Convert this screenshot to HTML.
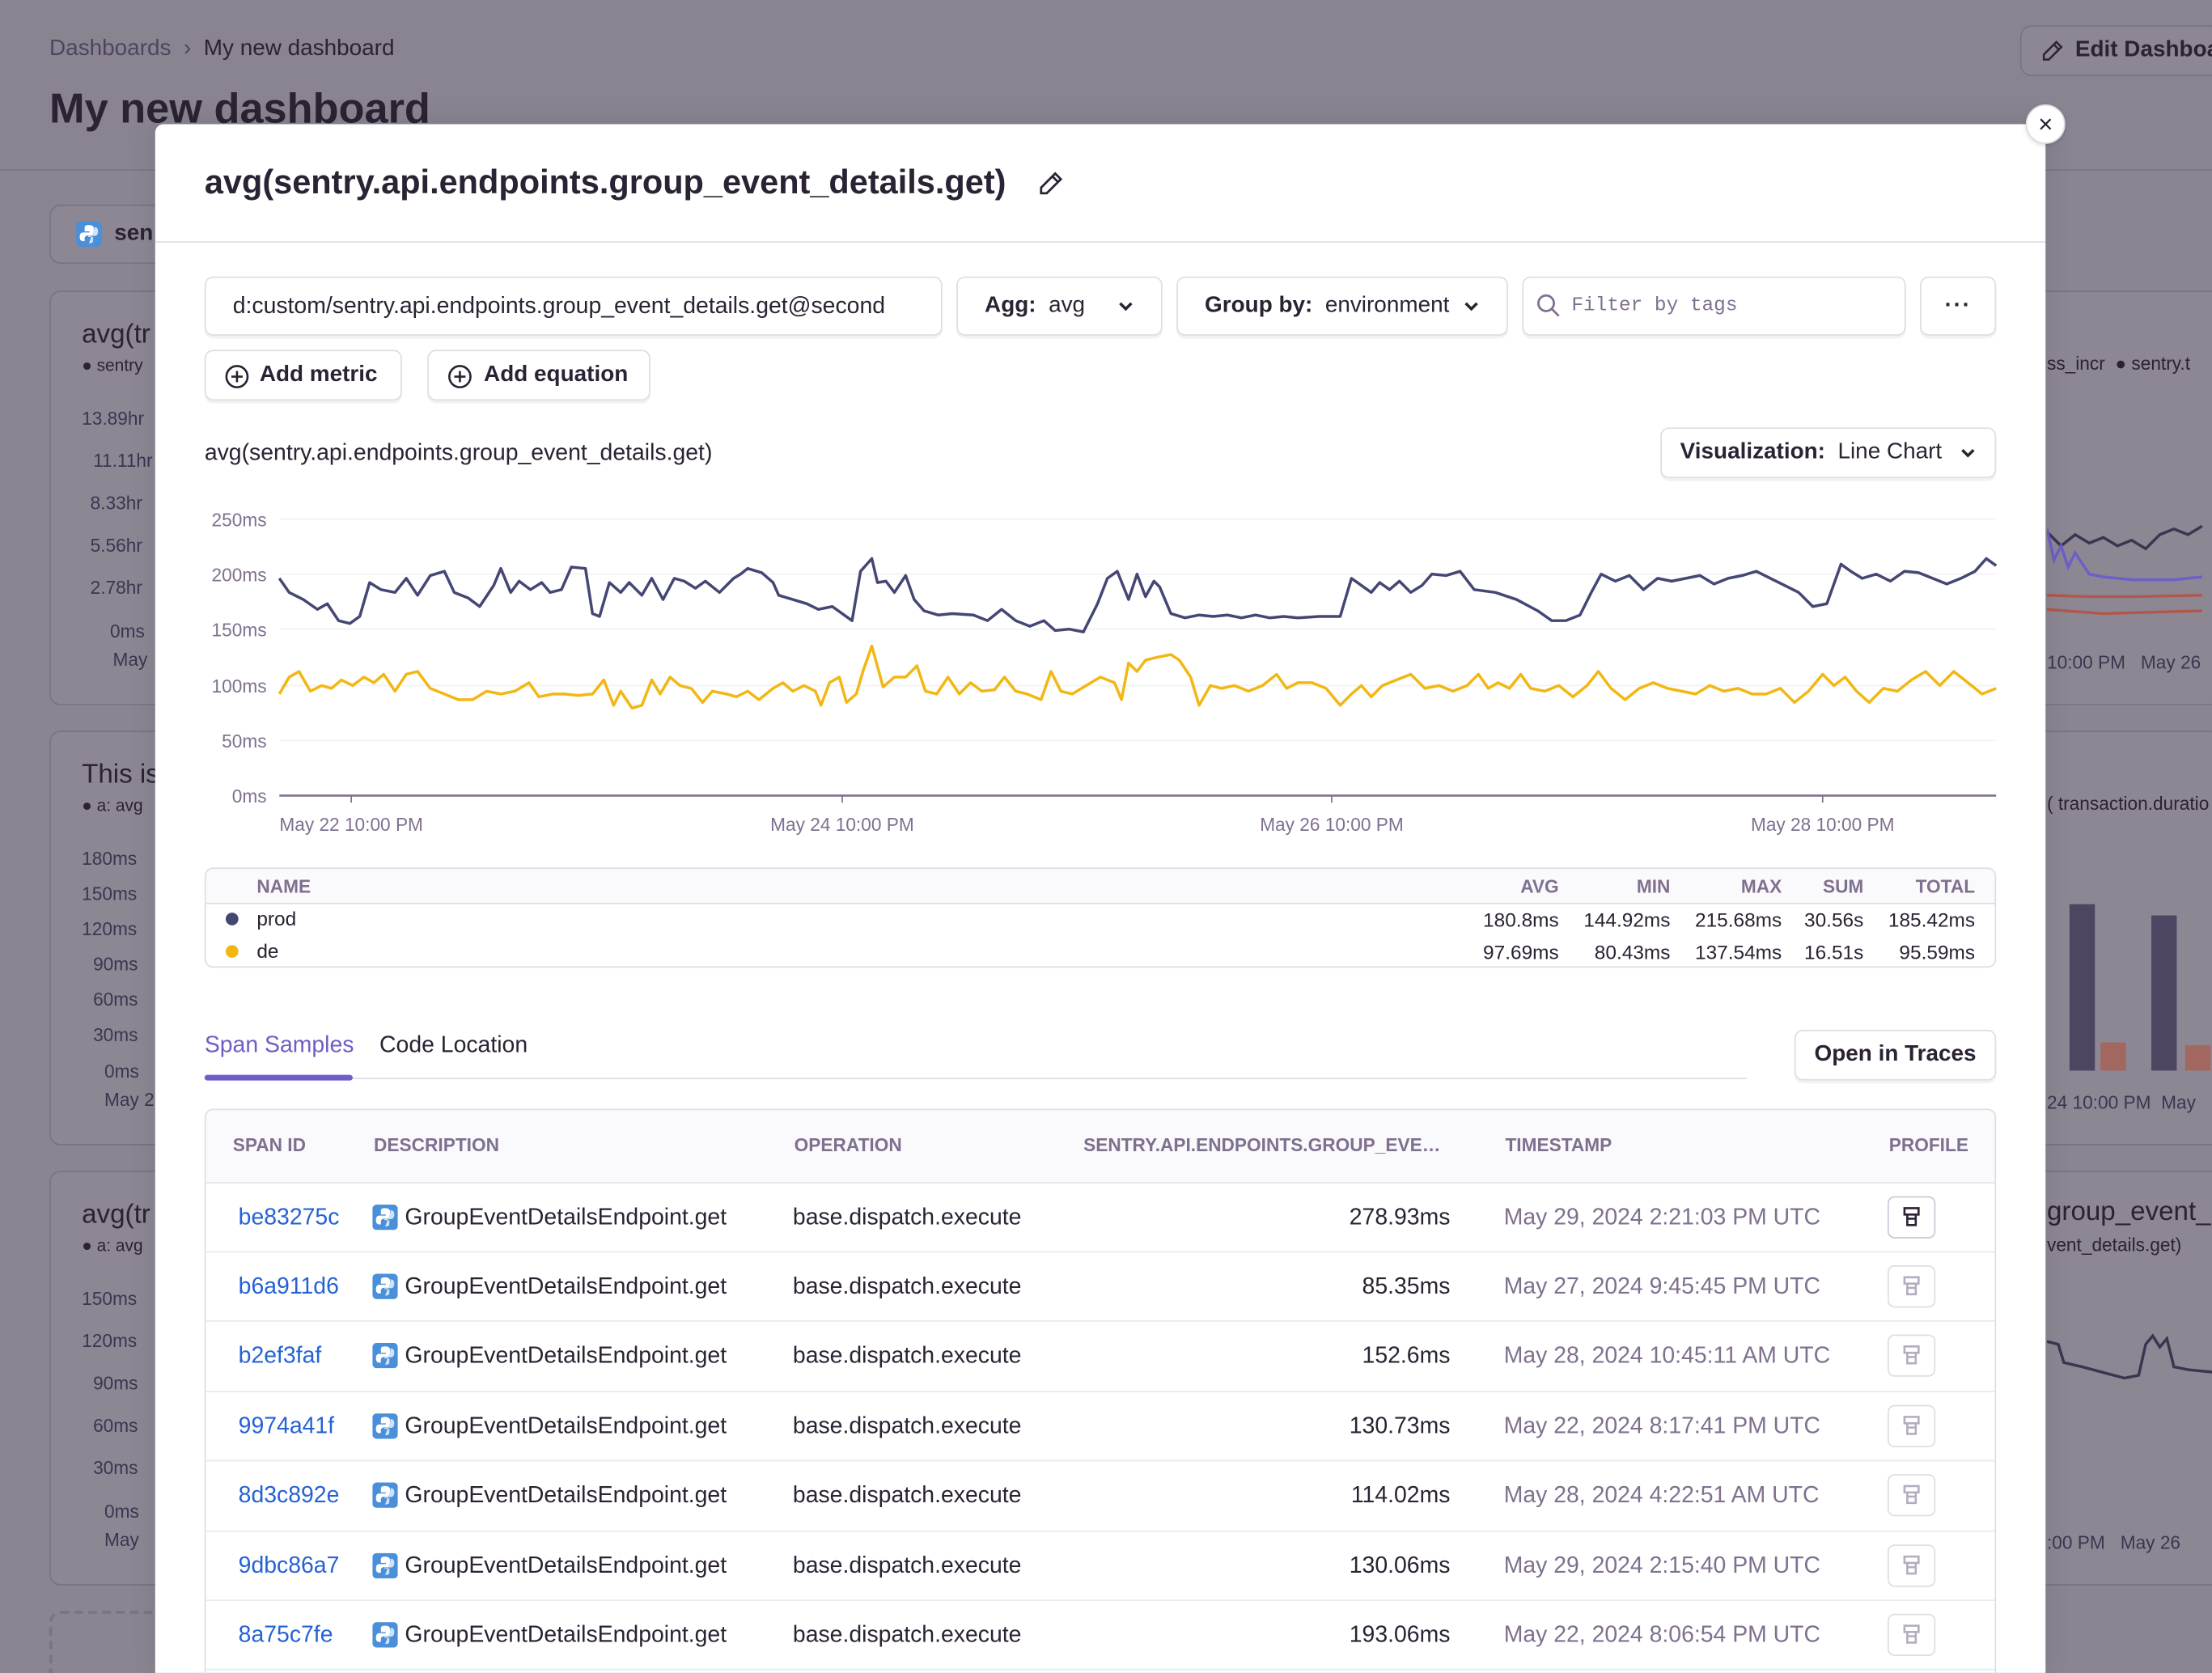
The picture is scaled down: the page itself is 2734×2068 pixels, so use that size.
<!DOCTYPE html>
<html><head><meta charset="utf-8">
<style>
html,body{margin:0;padding:0;width:2734px;height:2068px;overflow:hidden;background:#8b8592;}
#s{position:absolute;left:0;top:0;width:1568px;height:1186px;transform:scale(1.74362);transform-origin:0 0;font-family:"Liberation Sans",sans-serif;color:#2b2233;background:#8b8592;overflow:hidden}
.a{position:absolute}
.bgp{position:absolute;border:1px solid #7a7384;border-radius:8px;background:#8d8794}
.btn{position:absolute;border:1px solid #e0dce5;border-radius:6px;background:#fff;box-shadow:0 2px 0 rgba(43,34,51,.06);box-sizing:border-box;display:flex;align-items:center;font-size:16px}
.mut{color:#80708f}
.th{font-size:13px;font-weight:bold;color:#80708f;text-transform:uppercase}
.row{position:absolute;left:0;width:1268px;height:49px;border-top:1px solid #ebe8ef;font-size:16.3px}
.row span{position:absolute;top:15px;white-space:nowrap}
.pic{position:absolute;left:118px;top:15px;width:18px;height:18px}
.prof{position:absolute;left:1192px;top:9px;width:34px;height:30px;border:1px solid #e0dce5;border-radius:5px;box-sizing:border-box}
.prof svg{position:absolute;left:9px;top:6px}
</style></head><body><div id="s">
<svg width="0" height="0" style="position:absolute"><defs>
<g id="py"><rect x="0" y="0" width="18" height="18" rx="3" fill="#4a8fd9"/><path d="M9 2.5 C6 2.5 6 3.5 6 5 V7 H9.5 V7.8 H4.8 C3.3 7.8 2.5 9 2.5 11 C2.5 13 3.3 14 4.8 14 H6 V12 C6 10.8 7 10 8 10 H11 C12 10 12.5 9.3 12.5 8.5 V5 C12.5 3.5 11.5 2.5 9 2.5 Z" fill="#fff"/><path d="M9 15.5 C12 15.5 12 14.5 12 13 V11 H8.5 V10.2 H13.2 C14.7 10.2 15.5 9 15.5 7 C15.5 5 14.7 4 13.2 4 H12.8 V5.5" fill="#cfe2f7"/></g>
<g id="pf"><path d="M2 1.5 H12 V6 H2 Z M1.5 6 H12.5 M4 6 V13.5 H10 V6 M4 9 H10" fill="none" stroke-width="1.5"/></g>
</defs></svg>
<!-- background page -->
<div class="a" style="left:0;top:0;width:1568px;height:120px;background:#8a8491;border-bottom:1px solid #7d7687"></div>
<div class="a mut" style="left:35px;top:26px;font-size:16px;color:#4e4560">Dashboards &nbsp;›&nbsp; <span style="color:#2b2233">My new dashboard</span></div>
<div class="a" style="left:35px;top:61px;font-size:30px;font-weight:bold;color:#2b2233">My new dashboard</div>
<div class="bgp" style="left:1432px;top:18px;width:160px;height:34px;"><svg class="a" style="left:14px;top:9px" width="16" height="16" viewBox="0 0 18 18"><path d="M12 2 L16 6 L6 16 L2 16 L2 12 Z M10 4 L14 8" fill="none" stroke="#2b2233" stroke-width="1.6"/></svg><span class="a" style="left:38px;top:8px;font-size:16px;font-weight:bold;color:#2b2233">Edit Dashboard</span></div>
<div class="bgp" style="left:35px;top:145px;width:100px;height:40px"><svg class="a" style="left:18px;top:11px" width="18" height="18"><use href="#py"/></svg><span class="a" style="left:45px;top:11px;font-size:16px;font-weight:bold">sen</span></div>
<div class="bgp" style="left:35px;top:206px;width:100px;height:292px"><span class="a" style="left:22px;top:20px;font-size:19px">avg(tr</span><span class="a" style="left:22px;top:45px;font-size:12px">● sentry</span>
<span class="a" style="left:22px;top:82px;font-size:13px;color:#3d3550">13.89hr</span><span class="a" style="left:30px;top:112px;font-size:13px;color:#3d3550">11.11hr</span><span class="a" style="left:28px;top:142px;font-size:13px;color:#3d3550">8.33hr</span><span class="a" style="left:28px;top:172px;font-size:13px;color:#3d3550">5.56hr</span><span class="a" style="left:28px;top:202px;font-size:13px;color:#3d3550">2.78hr</span><span class="a" style="left:42px;top:233px;font-size:13px;color:#3d3550">0ms</span><span class="a" style="left:44px;top:253px;font-size:13px;color:#3d3550">May</span></div>
<div class="bgp" style="left:35px;top:518px;width:100px;height:292px"><span class="a" style="left:22px;top:20px;font-size:19px">This is</span><span class="a" style="left:22px;top:45px;font-size:12px">● a: avg</span>
<span class="a" style="left:22px;top:82px;font-size:13px;color:#3d3550">180ms</span><span class="a" style="left:22px;top:107px;font-size:13px;color:#3d3550">150ms</span><span class="a" style="left:22px;top:132px;font-size:13px;color:#3d3550">120ms</span><span class="a" style="left:30px;top:157px;font-size:13px;color:#3d3550">90ms</span><span class="a" style="left:30px;top:182px;font-size:13px;color:#3d3550">60ms</span><span class="a" style="left:30px;top:207px;font-size:13px;color:#3d3550">30ms</span><span class="a" style="left:38px;top:233px;font-size:13px;color:#3d3550">0ms</span><span class="a" style="left:38px;top:253px;font-size:13px;color:#3d3550">May 2</span></div>
<div class="bgp" style="left:35px;top:830px;width:100px;height:292px"><span class="a" style="left:22px;top:20px;font-size:19px">avg(tr</span><span class="a" style="left:22px;top:45px;font-size:12px">● a: avg</span>
<span class="a" style="left:22px;top:82px;font-size:13px;color:#3d3550">150ms</span><span class="a" style="left:22px;top:112px;font-size:13px;color:#3d3550">120ms</span><span class="a" style="left:30px;top:142px;font-size:13px;color:#3d3550">90ms</span><span class="a" style="left:30px;top:172px;font-size:13px;color:#3d3550">60ms</span><span class="a" style="left:30px;top:202px;font-size:13px;color:#3d3550">30ms</span><span class="a" style="left:38px;top:233px;font-size:13px;color:#3d3550">0ms</span><span class="a" style="left:38px;top:253px;font-size:13px;color:#3d3550">May</span></div>
<div class="a" style="left:35px;top:1142px;width:100px;height:60px;border:2px dashed #7a7384;border-radius:8px"></div>
<div class="bgp" style="left:1430px;top:206px;width:160px;height:292px"><span class="a" style="left:20px;top:43px;font-size:13px">ss_incr &nbsp;● sentry.t</span>
<svg class="a" style="left:20px;top:160px" width="140" height="80"><polyline fill="none" stroke="#3d3550" stroke-width="2" points="0,10 10,20 20,12 30,18 40,14 50,20 60,16 70,22 80,12 90,8 100,12 110,6"/><polyline fill="none" stroke="#6c5fc7" stroke-width="2" points="0,8 5,30 10,20 15,35 20,25 30,40 40,42 60,44 90,44 110,42"/><polyline fill="none" stroke="#b0584a" stroke-width="2" points="0,55 30,56 60,56 110,55"/><polyline fill="none" stroke="#b0584a" stroke-width="2" points="0,65 40,68 110,66"/></svg>
<span class="a" style="left:20px;top:255px;font-size:13px;color:#3d3550">10:00 PM &nbsp;&nbsp;May 26</span></div>
<div class="bgp" style="left:1430px;top:518px;width:160px;height:292px"><span class="a" style="left:20px;top:43px;font-size:13px">( transaction.duratio</span>
<div class="a" style="left:36px;top:122px;width:18px;height:118px;background:#4e4563"></div><div class="a" style="left:58px;top:220px;width:18px;height:20px;background:#a2675e"></div>
<div class="a" style="left:94px;top:130px;width:18px;height:110px;background:#4e4563"></div><div class="a" style="left:118px;top:222px;width:18px;height:18px;background:#a2675e"></div>
<span class="a" style="left:20px;top:255px;font-size:13px;color:#3d3550">24 10:00 PM &nbsp;May</span></div>
<div class="bgp" style="left:1430px;top:830px;width:160px;height:292px"><span class="a" style="left:20px;top:18px;font-size:19px">group_event_</span><span class="a" style="left:20px;top:44px;font-size:13px">vent_details.get)</span>
<svg class="a" style="left:20px;top:110px" width="140" height="50"><polyline fill="none" stroke="#3d3550" stroke-width="2" points="0,10 8,12 12,25 25,28 40,32 55,36 65,34 70,12 75,6 80,14 85,8 90,28 100,30 120,32 140,30"/></svg>
<span class="a" style="left:20px;top:255px;font-size:13px;color:#3d3550">:00 PM &nbsp;&nbsp;May 26</span></div>

<!-- modal -->
<div class="a" style="left:110px;top:88px;width:1340px;height:1100px;background:#fff;border-radius:6px 6px 0 0;box-shadow:0 0 20px rgba(0,0,0,.1)">
 <div class="a" style="left:35px;top:28px;font-size:23.8px;font-weight:bold;color:#2b2233;white-space:nowrap">avg(sentry.api.endpoints.group_event_details.get)</div>
 <svg class="a" style="left:626px;top:33px" width="18" height="18" viewBox="0 0 18 18"><path d="M12 2 L16 6 L6 16 L2 16 L2 12 Z M10 4 L14 8" fill="none" stroke="#2b2233" stroke-width="1.6"/></svg>
 <div class="a" style="left:0;top:83px;width:1340px;height:1px;background:#e0dce5"></div>
</div>
<div class="a" style="left:1436px;top:74px;width:26px;height:26px;border-radius:50%;background:#fff;border:1px solid #e0dce5;box-shadow:0 1px 3px rgba(0,0,0,.15);text-align:center;line-height:26px;font-size:18px;color:#2b2233">×</div>

<div class="btn" style="left:145px;top:196px;width:523px;height:42px;padding-left:19px;white-space:nowrap;font-size:16.3px">d:custom/sentry.api.endpoints.group_event_details.get@second</div>
<div class="btn" style="left:678px;top:196px;width:146px;height:42px;padding-left:19px"><b>Agg:</b>&nbsp; avg<svg class="a" style="left:113px;top:16px" width="12" height="10"><path d="M2 2 L6 6 L10 2" fill="none" stroke="#2b2233" stroke-width="2"/></svg></div>
<div class="btn" style="left:834px;top:196px;width:235px;height:42px;padding-left:19px"><b>Group by:</b>&nbsp; environment<svg class="a" style="left:202px;top:16px" width="12" height="10"><path d="M2 2 L6 6 L10 2" fill="none" stroke="#2b2233" stroke-width="2"/></svg></div>
<div class="btn" style="left:1079px;top:196px;width:272px;height:42px;padding-left:34px;font-family:'Liberation Mono',monospace;font-size:14px;color:#80708f">Filter by tags<svg class="a" style="left:9px;top:11px" width="18" height="18"><circle cx="7" cy="7" r="5.5" fill="none" stroke="#80708f" stroke-width="1.6"/><path d="M11 11 L16 16" stroke="#80708f" stroke-width="1.6"/></svg></div>
<div class="btn" style="left:1361px;top:196px;width:54px;height:42px;justify-content:center;font-weight:bold;letter-spacing:1px">···</div>
<div class="btn" style="left:145px;top:248px;width:140px;height:36px;padding-left:38px;font-weight:bold"><svg class="a" style="left:13px;top:9px" width="18" height="18"><circle cx="9" cy="9" r="7.5" fill="none" stroke="#2b2233" stroke-width="1.5"/><path d="M9 5 V13 M5 9 H13" stroke="#2b2233" stroke-width="1.5"/></svg>Add metric</div>
<div class="btn" style="left:303px;top:248px;width:158px;height:36px;padding-left:39px;font-weight:bold"><svg class="a" style="left:13px;top:9px" width="18" height="18"><circle cx="9" cy="9" r="7.5" fill="none" stroke="#2b2233" stroke-width="1.5"/><path d="M9 5 V13 M5 9 H13" stroke="#2b2233" stroke-width="1.5"/></svg>Add equation</div>

<div class="a" style="left:145px;top:312px;font-size:16.3px">avg(sentry.api.endpoints.group_event_details.get)</div>
<div class="btn" style="left:1177px;top:303px;width:238px;height:36px;padding-left:13px"><b>Visualization:</b>&nbsp; Line Chart<svg class="a" style="left:211px;top:13px" width="12" height="10"><path d="M2 2 L6 6 L10 2" fill="none" stroke="#2b2233" stroke-width="2"/></svg></div>

<!-- chart -->
<svg class="a" style="left:0;top:0" width="1568" height="600">
<g font-family="Liberation Sans" font-size="13" fill="#80708f" text-anchor="end">
<text x="189" y="373">250ms</text><text x="189" y="412">200ms</text><text x="189" y="451">150ms</text><text x="189" y="491">100ms</text><text x="189" y="530">50ms</text><text x="189" y="569">0ms</text></g>
<g stroke="#f3f1f5" stroke-width="1"><line x1="198" x2="1415" y1="368" y2="368"/><line x1="198" x2="1415" y1="407" y2="407"/><line x1="198" x2="1415" y1="446" y2="446"/><line x1="198" x2="1415" y1="486" y2="486"/><line x1="198" x2="1415" y1="525" y2="525"/></g>
<line x1="198" x2="1415" y1="564" y2="564" stroke="#80708f" stroke-width="1.5"/>
<g stroke="#80708f"><line x1="249" x2="249" y1="564" y2="569"/><line x1="597" x2="597" y1="564" y2="569"/><line x1="944" x2="944" y1="564" y2="569"/><line x1="1292" x2="1292" y1="564" y2="569"/></g>
<g font-family="Liberation Sans" font-size="13" fill="#80708f" text-anchor="middle"><text x="249" y="589">May 22 10:00 PM</text><text x="597" y="589">May 24 10:00 PM</text><text x="944" y="589">May 26 10:00 PM</text><text x="1292" y="589">May 28 10:00 PM</text></g>
<polyline fill="none" stroke="#444674" stroke-width="2" stroke-linejoin="round" points="198,410 205,420 215,425 225,432 232,428 240,440 248,442 255,437 262,413 270,418 280,420 288,410 296,422 305,408 315,405 322,420 332,424 340,430 350,415 355,403 362,420 368,412 376,418 384,413 390,420 398,418 405,402 415,403 420,435 425,437 432,413 440,420 446,413 455,422 462,410 470,425 478,410 485,412 493,417 500,412 510,420 520,410 525,407 530,403 540,406 548,413 552,422 562,425 572,428 580,432 590,430 597,435 604,440 610,405 618,396 622,413 628,412 634,420 642,408 648,425 655,433 665,436 675,435 690,436 700,440 710,432 720,440 730,444 740,440 748,447 758,446 768,448 778,428 785,410 792,405 800,425 806,407 812,423 818,412 822,416 830,435 840,438 850,436 860,437 870,436 880,438 890,436 900,438 910,437 920,438 935,437 950,437 958,410 965,415 972,420 978,413 985,418 992,412 1000,420 1008,415 1015,407 1025,408 1035,405 1045,418 1060,420 1075,425 1090,433 1100,440 1110,440 1120,436 1128,420 1135,407 1145,412 1155,408 1165,418 1175,410 1185,412 1195,410 1205,408 1215,414 1225,410 1235,408 1245,405 1255,410 1265,415 1275,420 1285,430 1295,428 1305,400 1312,405 1320,410 1330,407 1340,412 1350,405 1360,406 1370,410 1380,414 1390,410 1400,405 1408,396 1415,401"/>
<polyline fill="none" stroke="#f2b712" stroke-width="2" stroke-linejoin="round" points="198,492 205,480 212,476 220,490 228,486 235,488 242,482 250,486 258,480 265,484 272,478 280,490 288,478 296,476 305,488 315,492 325,496 335,496 345,490 355,492 365,490 375,484 382,494 392,492 400,492 410,493 420,492 428,482 435,500 440,490 448,502 455,500 462,482 468,492 475,480 482,486 490,488 498,498 505,490 515,492 522,494 530,490 538,496 548,488 555,484 562,490 570,486 578,490 582,500 588,484 595,480 600,498 607,492 612,475 618,458 626,487 634,480 642,480 650,472 656,490 664,492 672,480 680,492 688,484 696,490 705,489 712,480 720,490 728,492 738,496 745,476 752,490 760,492 770,486 780,480 790,484 795,496 800,470 806,476 812,468 820,466 830,464 836,468 844,480 850,500 858,486 866,488 875,486 885,490 895,486 905,478 912,488 920,484 930,484 940,488 950,500 958,492 965,486 972,494 980,486 990,482 1000,478 1010,488 1020,486 1030,490 1040,486 1048,478 1055,488 1062,484 1070,488 1078,478 1085,488 1095,490 1105,486 1115,494 1125,486 1133,476 1142,488 1152,496 1162,488 1172,484 1182,488 1192,490 1202,492 1212,486 1222,490 1232,488 1242,492 1252,492 1262,488 1272,498 1282,490 1292,478 1300,486 1308,480 1316,490 1325,498 1335,488 1345,490 1355,482 1365,476 1375,486 1385,476 1395,484 1405,492 1415,488"/>
</svg>

<!-- legend -->
<div class="a" style="left:145px;top:615px;width:1270px;height:71px;border:1px solid #e0dce5;border-radius:6px;overflow:hidden;box-sizing:border-box">
 <div class="a" style="left:0;top:0;width:1270px;height:24px;background:#faf9fb;border-bottom:1px solid #e0dce5"></div>
 <span class="a th" style="left:36px;top:5px">Name</span>
 <span class="a th" style="right:309px;top:5px">Avg</span><span class="a th" style="right:230px;top:5px">Min</span><span class="a th" style="right:151px;top:5px">Max</span><span class="a th" style="right:93px;top:5px">Sum</span><span class="a th" style="right:14px;top:5px">Total</span>
 <div class="a" style="left:14px;top:31px;width:9px;height:9px;border-radius:50%;background:#444674"></div><span class="a" style="left:36px;top:27px;font-size:14px">prod</span>
 <div class="a" style="left:14px;top:54px;width:9px;height:9px;border-radius:50%;background:#f2b712"></div><span class="a" style="left:36px;top:50px;font-size:14px">de</span>
 <div class="a" style="right:309px;top:25px;font-size:14px;text-align:right;line-height:23px">180.8ms<br>97.69ms</div>
 <div class="a" style="right:230px;top:25px;font-size:14px;text-align:right;line-height:23px">144.92ms<br>80.43ms</div>
 <div class="a" style="right:151px;top:25px;font-size:14px;text-align:right;line-height:23px">215.68ms<br>137.54ms</div>
 <div class="a" style="right:93px;top:25px;font-size:14px;text-align:right;line-height:23px">30.56s<br>16.51s</div>
 <div class="a" style="right:14px;top:25px;font-size:14px;text-align:right;line-height:23px">185.42ms<br>95.59ms</div>
</div>

<!-- tabs -->
<div class="a" style="left:145px;top:732px;font-size:16.3px;color:#6c5fc7">Span Samples</div>
<div class="a" style="left:269px;top:732px;font-size:16.3px">Code Location</div>
<div class="a" style="left:145px;top:764px;width:1093px;height:1px;background:#e0dce5"></div>
<div class="a" style="left:145px;top:762px;width:105px;height:4px;border-radius:2px;background:#6c5fc7"></div>
<div class="btn" style="left:1272px;top:730px;width:143px;height:36px;justify-content:center;font-weight:bold">Open in Traces</div>

<!-- table -->
<div class="a" style="left:145px;top:786px;width:1270px;height:420px;border:1px solid #e0dce5;border-radius:6px;overflow:hidden;box-sizing:border-box">
 <div class="a" style="left:0;top:0;width:1270px;height:51px;background:#faf9fb;border-bottom:1px solid #e0dce5"></div>
 <span class="a th" style="left:19px;top:17px">Span ID</span><span class="a th" style="left:119px;top:17px">Description</span><span class="a th" style="left:417px;top:17px">Operation</span><span class="a th" style="left:622px;top:17px">sentry.api.endpoints.group_eve…</span><span class="a th" style="left:921px;top:17px">Timestamp</span><span class="a th" style="left:1193px;top:17px">Profile</span>
 <div class="row" style="top:51px"><span style="left:23px;color:#2562d4">be83275c</span><svg class="pic"><use href="#py"/></svg><span style="left:141px">GroupEventDetailsEndpoint.get</span><span style="left:416px">base.dispatch.execute</span><span style="right:386px">278.93ms</span><span class="mut" style="left:920px">May 29, 2024 2:21:03 PM UTC</span><i class="prof" style="border-color:#cfc8d8"><svg width="14" height="16" stroke="#2b2233"><use href="#pf"/></svg></i></div>
 <div class="row" style="top:100px"><span style="left:23px;color:#2562d4">b6a911d6</span><svg class="pic"><use href="#py"/></svg><span style="left:141px">GroupEventDetailsEndpoint.get</span><span style="left:416px">base.dispatch.execute</span><span style="right:386px">85.35ms</span><span class="mut" style="left:920px">May 27, 2024 9:45:45 PM UTC</span><i class="prof"><svg width="14" height="16" stroke="#b5adbf"><use href="#pf"/></svg></i></div>
 <div class="row" style="top:149px"><span style="left:23px;color:#2562d4">b2ef3faf</span><svg class="pic"><use href="#py"/></svg><span style="left:141px">GroupEventDetailsEndpoint.get</span><span style="left:416px">base.dispatch.execute</span><span style="right:386px">152.6ms</span><span class="mut" style="left:920px">May 28, 2024 10:45:11 AM UTC</span><i class="prof"><svg width="14" height="16" stroke="#b5adbf"><use href="#pf"/></svg></i></div>
 <div class="row" style="top:199px"><span style="left:23px;color:#2562d4">9974a41f</span><svg class="pic"><use href="#py"/></svg><span style="left:141px">GroupEventDetailsEndpoint.get</span><span style="left:416px">base.dispatch.execute</span><span style="right:386px">130.73ms</span><span class="mut" style="left:920px">May 22, 2024 8:17:41 PM UTC</span><i class="prof"><svg width="14" height="16" stroke="#b5adbf"><use href="#pf"/></svg></i></div>
 <div class="row" style="top:248px"><span style="left:23px;color:#2562d4">8d3c892e</span><svg class="pic"><use href="#py"/></svg><span style="left:141px">GroupEventDetailsEndpoint.get</span><span style="left:416px">base.dispatch.execute</span><span style="right:386px">114.02ms</span><span class="mut" style="left:920px">May 28, 2024 4:22:51 AM UTC</span><i class="prof"><svg width="14" height="16" stroke="#b5adbf"><use href="#pf"/></svg></i></div>
 <div class="row" style="top:298px"><span style="left:23px;color:#2562d4">9dbc86a7</span><svg class="pic"><use href="#py"/></svg><span style="left:141px">GroupEventDetailsEndpoint.get</span><span style="left:416px">base.dispatch.execute</span><span style="right:386px">130.06ms</span><span class="mut" style="left:920px">May 29, 2024 2:15:40 PM UTC</span><i class="prof"><svg width="14" height="16" stroke="#b5adbf"><use href="#pf"/></svg></i></div>
 <div class="row" style="top:347px"><span style="left:23px;color:#2562d4">8a75c7fe</span><svg class="pic"><use href="#py"/></svg><span style="left:141px">GroupEventDetailsEndpoint.get</span><span style="left:416px">base.dispatch.execute</span><span style="right:386px">193.06ms</span><span class="mut" style="left:920px">May 22, 2024 8:06:54 PM UTC</span><i class="prof"><svg width="14" height="16" stroke="#b5adbf"><use href="#pf"/></svg></i></div>
 <div class="row" style="top:396px"></div>
</div>
</div></body></html>
